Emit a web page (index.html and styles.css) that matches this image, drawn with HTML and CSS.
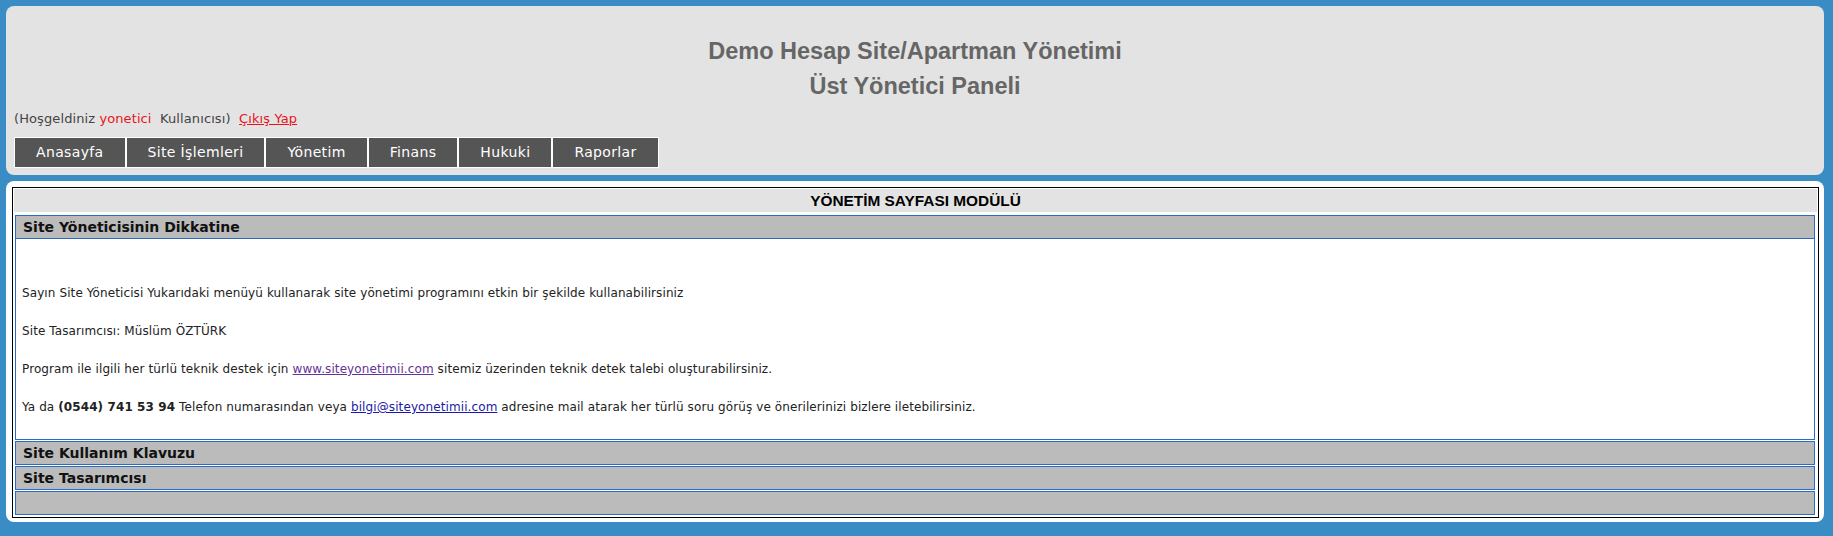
FILE: index.html
```html
<!DOCTYPE html>
<html lang="tr">
<head>
    <meta charset="UTF-8">
    <meta name="viewport" content="width=device-width, initial-scale=1.0">
    <title>Üst Yönetici Paneli</title>
    <link rel="stylesheet" href="styles.css">
</head>
<body>
    <div class="header">
        <h1 class="title">Demo Hesap Site/Apartman Yönetimi<br>Üst Yönetici Paneli</h1>
        <div class="welcome">
            (Hoşgeldiniz <span class="user">yonetici</span>&nbsp; Kullanıcısı)&nbsp; <a href="#" class="logout">Çıkış Yap</a>
        </div>
        <ul class="menu">
            <li><a href="#">Anasayfa</a></li>
            <li><a href="#">Site İşlemleri</a></li>
            <li><a href="#">Yönetim</a></li>
            <li><a href="#">Finans</a></li>
            <li><a href="#">Hukuki</a></li>
            <li><a href="#">Raporlar</a></li>
        </ul>
    </div>

    <div class="content">
        <div class="module">
            <div class="module-title">YÖNETİM SAYFASI MODÜLÜ</div>
            <div class="module-body">
                <div class="section">
                    <div class="section-head">Site Yöneticisinin Dikkatine</div>
                    <div class="section-text">
                        <p>Sayın Site Yöneticisi Yukarıdaki menüyü kullanarak site yönetimi programını etkin bir şekilde kullanabilirsiniz</p>
                        <p>Site Tasarımcısı: Müslüm ÖZTÜRK</p>
                        <p>Program ile ilgili her türlü teknik destek için <a href="#" class="visited">www.siteyonetimii.com</a> sitemiz üzerinden teknik detek talebi oluşturabilirsiniz.</p>
                        <p>Ya da <b>(0544) 741 53 94</b> Telefon numarasından veya <a href="#" class="mail">bilgi@siteyonetimii.com</a> adresine mail atarak her türlü soru görüş ve önerilerinizi bizlere iletebilirsiniz.</p>
                    </div>
                </div>
                <div class="section">
                    <div class="section-head">Site Kullanım Klavuzu</div>
                </div>
                <div class="section">
                    <div class="section-head">Site Tasarımcısı</div>
                </div>
                <div class="section">
                    <div class="section-head"></div>
                </div>
            </div>
        </div>
    </div>
</body>
</html>
```

FILE: styles.css
```css
body {
    margin: 0;
    padding: 6px 9px 13px 6px;
    background-color: #3a8cc5;
    font-family: "DejaVu Sans", Verdana, sans-serif;
}
.header {
    background: #e3e3e3;
    border-radius: 8px;
    height: 169px;
    padding: 0 8px;
    box-sizing: border-box;
}
.title {
    margin: 0;
    padding-top: 28px;
    text-align: center;
    font-family: "Liberation Sans", Arial, sans-serif;
    font-size: 23.5px;
    line-height: 35px;
    color: #666;
}
.welcome {
    margin-top: 7px;
    font-size: 13px;
    line-height: 16px;
    letter-spacing: 0.1px;
    color: #444;
}
.user {
    color: #e8141b;
}
.logout {
    color: #e8141b;
}
.menu {
    display: flex;
    list-style: none;
    margin: 10px 0 0 0;
    padding: 0;
}
.menu a {
    display: block;
    height: 29px;
    line-height: 29px;
    padding: 0 21px;
    border: 1px solid #fff;
    background-color: #555;
    color: #fff;
    font-size: 14px;
    letter-spacing: 0.35px;
    text-decoration: none;
}
.content {
    margin-top: 6px;
    background: #fff;
    border-radius: 8px;
    padding: 6px 5px 4px 6px;
}
.module {
    border: 1px solid #000;
    padding: 1px;
}
.module-title {
    background: #e3e3e3;
    height: 23px;
    line-height: 23px;
    text-align: center;
    font-family: "Liberation Sans", Arial, sans-serif;
    font-weight: bold;
    font-size: 15.4px;
    color: #000;
}
.module-body {
    padding: 2px 2px 1px 1px;
}
.section {
    border: 1px solid #2a6cc2;
    margin-top: 1px;
}
.section-head {
    background: #bbbbbb;
    height: 22px;
    line-height: 22px;
    padding-left: 7px;
    font-size: 14px;
    font-weight: bold;
    color: #111;
}
.section-text {
    border-top: 1px solid #2a6cc2;
    padding: 47px 6px 1px 6px;
    font-size: 12px;
    letter-spacing: 0.1px;
    color: #222;
}
.section-text p {
    margin: 0 0 23px 0;
    line-height: 15px;
}
.visited {
    color: #663399;
}
.mail {
    color: #1a1aa6;
}
```
